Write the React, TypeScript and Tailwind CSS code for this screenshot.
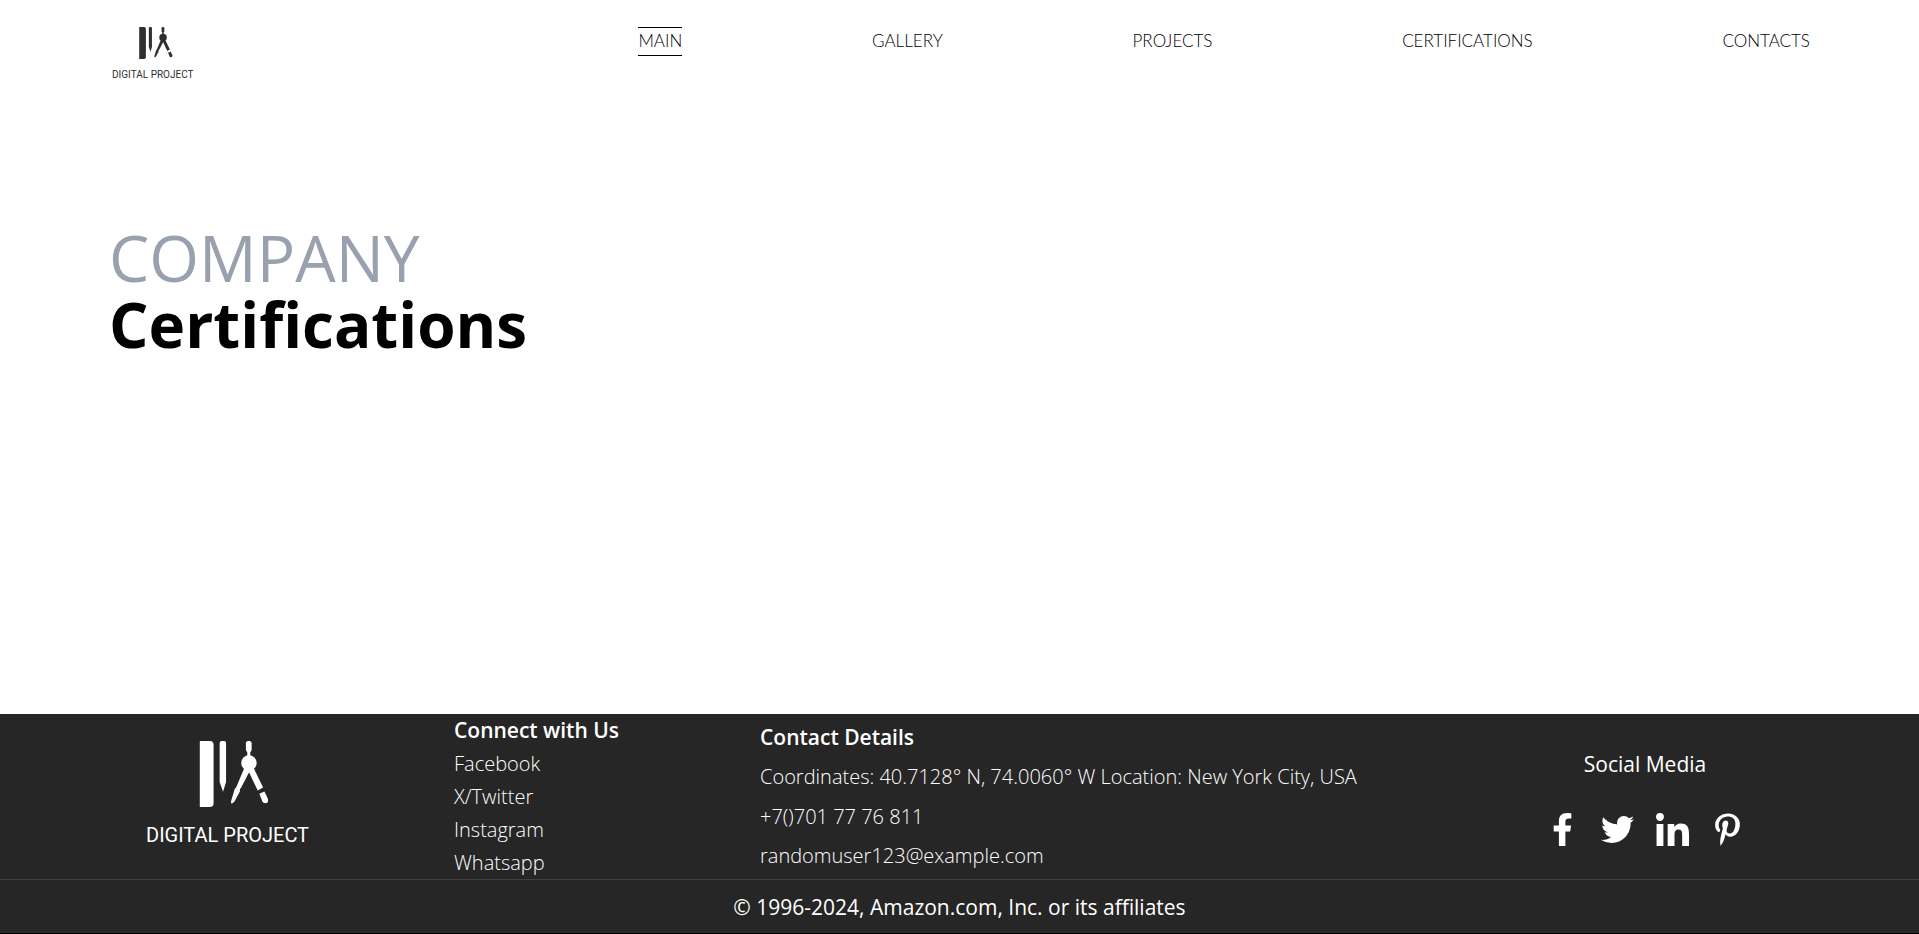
import { FaFacebookF, FaTwitter, FaPinterestP } from "react-icons/fa";

const navItems = ["MAIN", "GALLERY", "PROJECTS", "CERTIFICATIONS", "CONTACTS"];
const connectLinks = ["Facebook", "X/Twitter", "Instagram", "Whatsapp"];

function LinkedinIcon({ className }: { className: string }) {
  return (
    <svg viewBox="0 0 448 448" fill="currentColor" className={className} aria-hidden="true">
      <path d="M100.28 448H7.4V148.9h92.88zM53.79 108.1C24.09 108.1 0 83.5 0 53.8a53.79 53.79 0 0 1 107.58 0c0 29.7-24.1 54.3-53.79 54.3zM447.9 448h-92.68V302.4c0-34.7-.7-79.2-48.29-79.2-48.29 0-55.69 37.7-55.69 76.7V448h-92.78V148.9h89.08v40.8h1.3c12.4-23.5 42.69-48.3 87.88-48.3 94 0 111.28 61.9 111.28 142.3V448z" />
    </svg>
  );
}

const socials = [
  { name: "Facebook", Icon: FaFacebookF },
  { name: "Twitter", Icon: FaTwitter },
  { name: "LinkedIn", Icon: LinkedinIcon },
  { name: "Pinterest", Icon: FaPinterestP },
];

function LogoMark({ className }: { className: string }) {
  return (
    <svg viewBox="-38 0 243 196" fill="currentColor" className={className} aria-hidden="true">
      <path d="M0 0H30Q41 0 41 12V184Q41 196 30 196H0Z" />
      <path d="M59 6Q59 0 65 0H72Q78 0 78 6V122L69 151L59 122Z" />
      <rect x="137" y="0" width="17" height="33" rx="7" />
      <rect x="141" y="28" width="9" height="20" />
      <circle cx="146" cy="65" r="23" />
      <path d="M133 78L150 86L123 138Q118 141 119 150L103 180Q98 187 93 185L93 178L104 142L108 138Z" />
      <path d="M143 86L159 78L188 138L172 147Z" />
      <path d="M177 157L192 150L203 173Q205 183 196 185Q189 186 186 180Z" />
    </svg>
  );
}

export default function App() {
  return (
    <div className="flex min-h-screen flex-col bg-white font-['Segoe_UI','Open_Sans',sans-serif] text-black">
      <header className="flex items-start justify-between pt-[27px] pr-[109px] pl-28">
        <a href="#" className="flex flex-col items-center text-[#2f2f2f]">
          <LogoMark className="h-8" />
          <span className="mt-2 font-[Roboto,sans-serif] text-[10px] leading-4 whitespace-nowrap">DIGITAL PROJECT</span>
        </a>
        <nav className="flex w-[69%] justify-between font-[Lato,sans-serif] text-[17px] font-light">
          {navItems.map((item, i) => (
            <a
              key={item}
              href="#"
              className={
                i === 0
                  ? "border-y border-black pb-[2px] leading-[25px]"
                  : "border-y border-transparent pb-[2px] leading-[25px]"
              }
            >
              {item}
            </a>
          ))}
        </nav>
      </header>

      <main className="flex-1 px-[109px] pt-[142px]">
        <h1 className="leading-[66px]">
          <span className="block text-[64px] text-gray-400">COMPANY</span>
          <span className="block text-[62px] font-bold">Certifications</span>
        </h1>
      </main>

      <footer className="border-b border-black bg-[#262626] text-[21px] leading-[33px] text-white">
        <div className="grid grid-cols-[342fr_306fr_723fr_324fr] border-b border-[#414141] px-28">
          <a href="#" className="flex flex-col items-start justify-center pl-[34px]">
            <span className="flex flex-col items-center">
              <LogoMark className="h-[66px]" />
              <span className="mt-3 font-[Roboto,sans-serif] text-[20px] whitespace-nowrap">
                DIGITAL PROJECT
              </span>
            </span>
          </a>
          <div className="flex flex-col">
            <h2 className="font-semibold">Connect with Us</h2>
            {connectLinks.map((link) => (
              <a key={link} href="#" className="text-[20px] font-light">
                {link}
              </a>
            ))}
          </div>
          <div className="flex flex-col justify-evenly text-[20px] font-light">
            <h2 className="text-[21px] font-semibold">Contact Details</h2>
            <p>Coordinates: 40.7128° N, 74.0060° W Location: New York City, USA</p>
            <p>+7()701 77 76 811</p>
            <a href="mailto:randomuser123@example.com">randomuser123@example.com</a>
          </div>
          <div className="flex flex-col items-center justify-center gap-8">
            <h2>Social Media</h2>
            <div className="flex gap-[22px]">
              {socials.map(({ name, Icon }) => (
                <a key={name} href="#" aria-label={name}>
                  <Icon className="size-[33px]" />
                </a>
              ))}
            </div>
          </div>
        </div>
        <p className="pt-[11px] pb-[9px] text-center">© 1996-2024, Amazon.com, Inc. or its affiliates</p>
      </footer>
    </div>
  );
}
